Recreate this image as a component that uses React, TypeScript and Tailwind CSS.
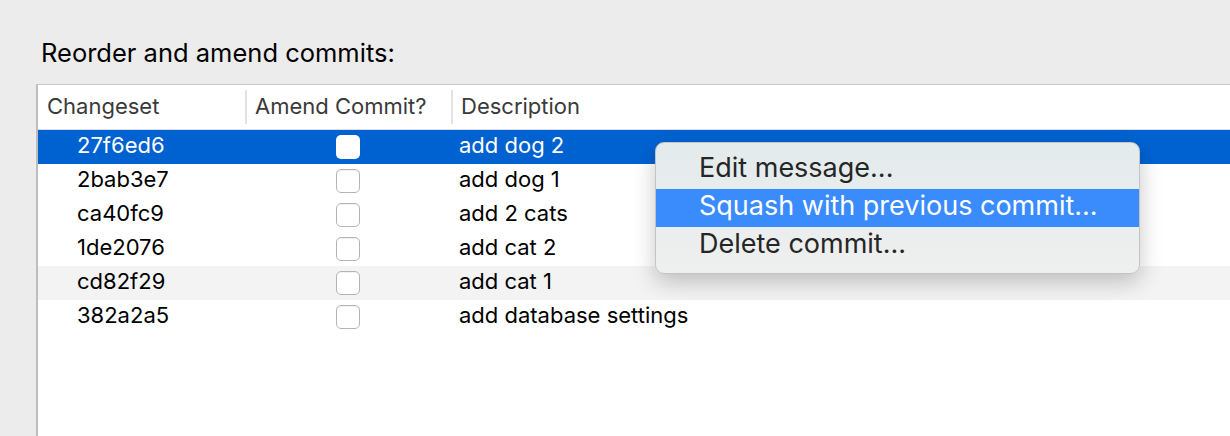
import React from "react";

const commits = [
  { hash: "27f6ed6", desc: "add dog 2" },
  { hash: "2bab3e7", desc: "add dog 1" },
  { hash: "ca40fc9", desc: "add 2 cats" },
  { hash: "1de2076", desc: "add cat 2" },
  { hash: "cd82f29", desc: "add cat 1" },
  { hash: "382a2a5", desc: "add database settings" },
];

const menuItems = ["Edit message...", "Squash with previous commit...", "Delete commit..."];

export default function App() {
  const selected = 0;
  const striped = 4;

  return (
    <div
      className="relative h-[436px] w-[1230px] overflow-hidden bg-[#ececec]"
      style={{ fontFamily: "Inter, 'Noto Sans', sans-serif" }}
    >
      <div className="pl-[41px] pt-[38px] text-[25.5px] leading-[30px] text-black">Reorder and amend commits:</div>

      <div className="ml-[36px] mt-[16px] h-[400px] border-l-2 border-t border-l-[#bdbdbd] border-t-[#c8c8c8] bg-white">
        {/* header */}
        <div className="flex h-[45px] items-center border-b border-[#dcdcdc] text-[22px] text-[#3a3a3a]">
          <div className="w-[207px] pb-[2px] pl-[9px]">Changeset</div>
          <div className="h-[34px] w-[2px] bg-[#e3e3e3]" />
          <div className="w-[204px] pb-[2px] pl-[8px]">Amend Commit?</div>
          <div className="h-[34px] w-[2px] bg-[#e3e3e3]" />
          <div className="pb-[2px] pl-[8px]">Description</div>
        </div>

        {commits.map((c, i) => {
          const isSel = i === selected;
          return (
            <div
              key={c.hash}
              className={`flex h-[34px] items-center text-[22px] ${
                isSel ? "bg-[#0062d1] text-white" : i === striped ? "bg-[#f3f3f3] text-black" : "bg-white text-black"
              }`}
            >
              <div className="w-[298px] pb-[4px] pl-[39px]">{c.hash}</div>
              <div
                className={`h-[24px] w-[24px] rounded-[5px] ${
                  isSel ? "bg-white" : "border border-[#b4b4b4] bg-white shadow-[inset_0_1px_1px_rgba(0,0,0,0.06)]"
                }`}
              />
              <div className="pb-[4px] pl-[99px]">{c.desc}</div>
            </div>
          );
        })}
      </div>

      {/* context menu */}
      <div className="absolute left-[655px] top-[142px] w-[485px] rounded-[9px] border border-[#c4c4c4] bg-gradient-to-b from-[#e3ebec] to-[#efefef] py-[8px] shadow-[0_8px_22px_rgba(0,0,0,0.22)]">
        {menuItems.map((m, i) => (
          <div
            key={m}
            className={`flex h-[38px] items-center pb-[3px] pl-[43px] text-[27px] ${
              i === 1 ? "bg-[#3a8bfc] text-white" : "text-[#262626]"
            }`}
          >
            {m}
          </div>
        ))}
      </div>
    </div>
  );
}
